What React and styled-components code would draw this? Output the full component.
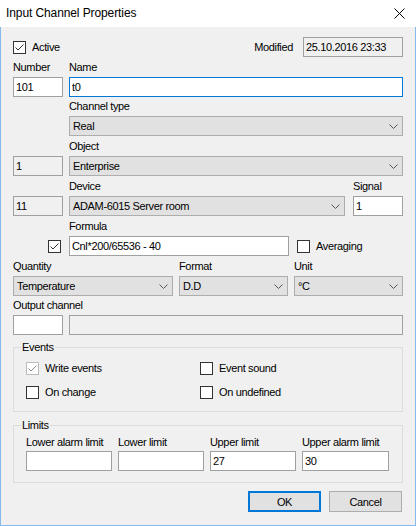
import React from "react";
import styled, { createGlobalStyle } from "styled-components";

const GlobalStyle = createGlobalStyle`
  html, body {
    margin: 0;
    padding: 0;
    background: #fff;
  }
  body {
    font-family: "Liberation Sans", Arial, sans-serif;
  }
`;

const Window = styled.div`
  width: 416px;
  height: 526px;
  display: flex;
  flex-direction: column;
  background: #f0f0f0;
  overflow: hidden;
`;

const TitleBar = styled.div`
  height: 27px;
  flex: none;
  background: #fff;
  display: flex;
  align-items: center;
  justify-content: space-between;
  padding: 0 11px 1px 6px;
  box-sizing: border-box;
  font-size: 12px;
  letter-spacing: -0.1px;
  color: #000;
`;

const Client = styled.div`
  flex: 1;
  box-sizing: border-box;
  border: 1px solid #83b9ec;
  border-top: none;
  padding: 10px 12px 0;
  font-size: 11px;
  letter-spacing: -0.35px;
  color: #000;
`;

const TopRow = styled.div`
  height: 20px;
  display: flex;
  align-items: center;
  justify-content: space-between;
`;

const Inline = styled.div`
  display: flex;
  align-items: center;
  gap: ${(p) => p.$gap || 10}px;
`;

const Pair = styled.div`
  display: grid;
  grid-template-columns: 50px 1fr;
  column-gap: 6px;
  margin-top: ${(p) => (p.$label ? (p.$tight ? 3 : 4) : 0)}px;
  margin-bottom: ${(p) => (p.$label ? 3 : 0)}px;
`;

const Triple = styled.div`
  display: grid;
  grid-template-columns: 160px 109px 109px;
  column-gap: 6px;
  margin-top: ${(p) => (p.$label ? 4 : 0)}px;
  margin-bottom: ${(p) => (p.$label ? 3 : 0)}px;
`;

const Split = styled.div`
  display: grid;
  grid-template-columns: ${(p) => p.$cols};
  column-gap: 8px;
  align-items: center;
`;

const Label = styled.div`
  height: 13px;
  line-height: 13px;
  white-space: nowrap;
`;

const Field = styled.div`
  height: 20px;
  box-sizing: border-box;
  border: 1px solid ${(p) => (p.$focus ? "#0078d7" : "#a0a0a0")};
  background: ${(p) => (p.$readOnly ? "#f0f0f0" : "#fff")};
  padding: 0 2px;
  display: flex;
  align-items: center;
  white-space: nowrap;
  overflow: hidden;
  width: ${(p) => (p.$width ? `${p.$width}px` : "auto")};
`;

const ComboBox = styled.div`
  height: 20px;
  box-sizing: border-box;
  border: 1px solid #adadad;
  background: #e1e1e1;
  padding: 0 4px 0 3px;
  display: flex;
  align-items: center;
  justify-content: space-between;
  white-space: nowrap;
`;

const CheckRow = styled.label`
  display: inline-flex;
  align-items: center;
  gap: 6px;
  white-space: nowrap;
`;

const Box = styled.span`
  width: 13px;
  height: 13px;
  box-sizing: border-box;
  border: 1px solid ${(p) => (p.$dim ? "#bcbcbc" : "#333")};
  background: #fff;
  display: flex;
  flex: none;
`;

const CheckCell = styled.div`
  display: flex;
  align-items: center;
  justify-content: flex-end;
  padding-right: 2px;
`;

const Group = styled.fieldset`
  margin: ${(p) => p.$top}px 0 0;
  min-width: 0;
  border: 1px solid #dcdcdc;
  padding: 4px 12px ${(p) => p.$bottom}px;
`;

const Legend = styled.legend`
  padding: 0 1px;
  margin-left: -5px;
  line-height: 13px;
  font-size: 11px;
`;

const EventGrid = styled.div`
  display: grid;
  grid-template-columns: 174px 1fr;
  grid-auto-rows: 20px;
  row-gap: 4px;
  align-items: center;
`;

const LimitGrid = styled.div`
  display: grid;
  grid-template-columns: 86px 86px 86px 87px;
  column-gap: 6px;
  row-gap: 2px;
`;

const Buttons = styled.div`
  display: flex;
  justify-content: flex-end;
  gap: 8px;
  margin-top: 8px;
  padding-right: 1px;
`;

const Button = styled.div`
  width: 73px;
  height: 21px;
  box-sizing: border-box;
  border: ${(p) => (p.$default ? "2px solid #0078d7" : "1px solid #adadad")};
  background: #e1e1e1;
  display: flex;
  align-items: center;
  justify-content: center;
`;

const Check = ({ checked, dim, children }) => (
  <CheckRow>
    <Box $dim={dim}>
      {checked && (
        <svg width="11" height="11" viewBox="0 0 11 11">
          <polyline
            points="1.5,5.5 4,8 9.5,2.5"
            fill="none"
            stroke={dim ? "#8a8a8a" : "#333"}
            strokeWidth="1"
          />
        </svg>
      )}
    </Box>
    {children}
  </CheckRow>
);

const Chevron = () => (
  <svg width="9" height="5" viewBox="0 0 9 5">
    <polyline points="0.5,0.5 4.5,4.5 8.5,0.5" fill="none" stroke="#555" strokeWidth="1" />
  </svg>
);

const Combo = ({ children }) => (
  <ComboBox>
    <span>{children}</span>
    <Chevron />
  </ComboBox>
);

const CloseIcon = () => (
  <svg width="11" height="11" viewBox="0 0 11 11">
    <path d="M0.5 0.5 L10.5 10.5 M10.5 0.5 L0.5 10.5" stroke="#000" strokeWidth="1" />
  </svg>
);

export default function App() {
  return (
    <Window>
      <GlobalStyle />
      <TitleBar>
        <span>Input Channel Properties</span>
        <CloseIcon />
      </TitleBar>
      <Client>
        <TopRow>
          <Check checked>Active</Check>
          <Inline>
            <span>Modified</span>
            <Field $readOnly $width={100}>25.10.2016 23:33</Field>
          </Inline>
        </TopRow>

        <Pair $label>
          <Label>Number</Label>
          <Label>Name</Label>
        </Pair>
        <Pair>
          <Field>101</Field>
          <Field $focus>t0</Field>
        </Pair>

        <Pair $label $tight>
          <span />
          <Label>Channel type</Label>
        </Pair>
        <Pair>
          <span />
          <Combo>Real</Combo>
        </Pair>

        <Pair $label>
          <span />
          <Label>Object</Label>
        </Pair>
        <Pair>
          <Field $readOnly>1</Field>
          <Combo>Enterprise</Combo>
        </Pair>

        <Pair $label>
          <span />
          <Split $cols="1fr 50px">
            <Label>Device</Label>
            <Label>Signal</Label>
          </Split>
        </Pair>
        <Pair>
          <Field $readOnly>11</Field>
          <Split $cols="1fr 50px">
            <Combo>ADAM-6015 Server room</Combo>
            <Field>1</Field>
          </Split>
        </Pair>

        <Pair $label>
          <span />
          <Label>Formula</Label>
        </Pair>
        <Pair>
          <CheckCell>
            <Check checked />
          </CheckCell>
          <Split $cols="220px 1fr">
            <Field>Cnl*200/65536 - 40</Field>
            <Check>Averaging</Check>
          </Split>
        </Pair>

        <Triple $label>
          <Label>Quantity</Label>
          <Label>Format</Label>
          <Label>Unit</Label>
        </Triple>
        <Triple>
          <Combo>Temperature</Combo>
          <Combo>D.D</Combo>
          <Combo>°C</Combo>
        </Triple>

        <Pair $label $tight>
          <Label style={{ gridColumn: "1 / 3" }}>Output channel</Label>
        </Pair>
        <Pair>
          <Field />
          <Field $readOnly />
        </Pair>

        <Group $top={6} $bottom={9}>
          <Legend>Events</Legend>
          <EventGrid>
            <Check checked dim>Write events</Check>
            <Check>Event sound</Check>
            <Check>On change</Check>
            <Check>On undefined</Check>
          </EventGrid>
        </Group>

        <Group $top={7} $bottom={11}>
          <Legend>Limits</Legend>
          <LimitGrid>
            <Label>Lower alarm limit</Label>
            <Label>Lower limit</Label>
            <Label>Upper limit</Label>
            <Label>Upper alarm limit</Label>
            <Field />
            <Field />
            <Field>27</Field>
            <Field>30</Field>
          </LimitGrid>
        </Group>

        <Buttons>
          <Button $default>OK</Button>
          <Button>Cancel</Button>
        </Buttons>
      </Client>
    </Window>
  );
}
